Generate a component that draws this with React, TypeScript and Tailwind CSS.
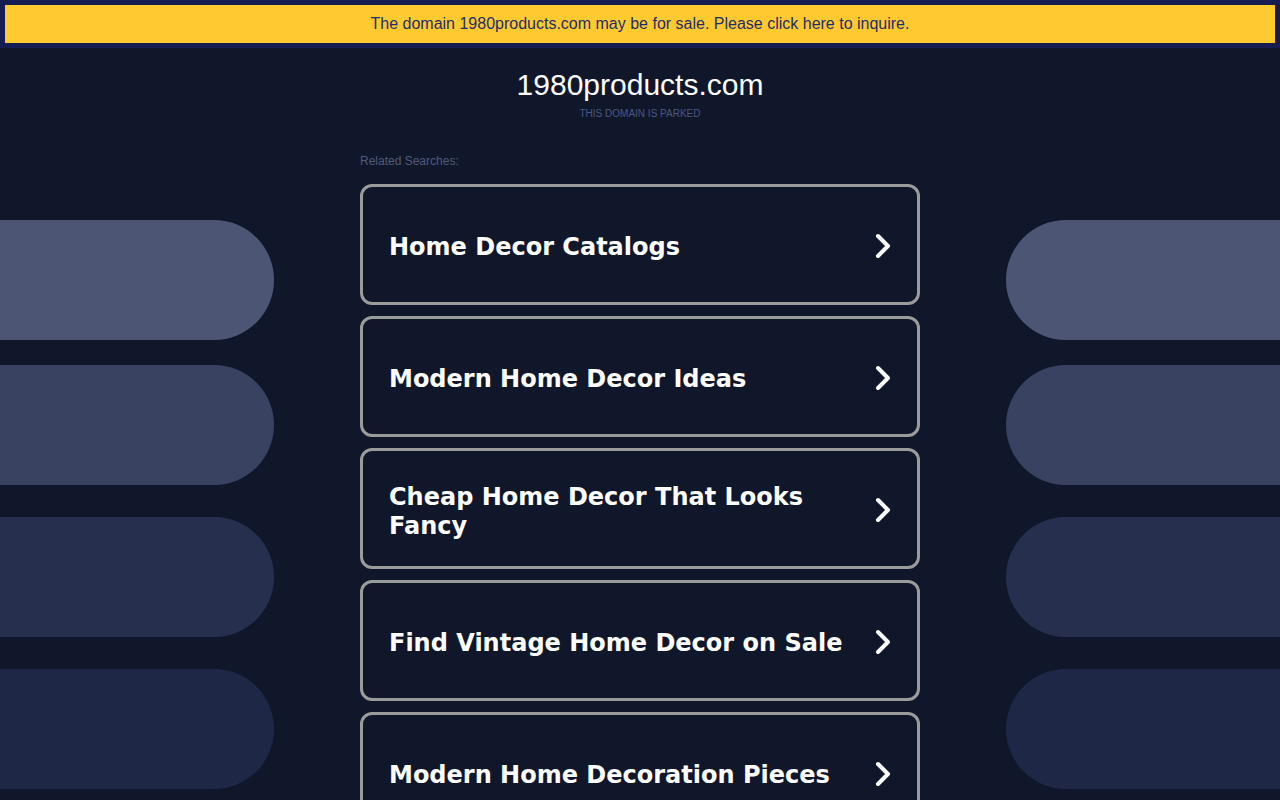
const searches = [
  'Home Decor Catalogs',
  'Modern Home Decor Ideas',
  'Cheap Home Decor That Looks Fancy',
  'Find Vintage Home Decor on Sale',
  'Modern Home Decoration Pieces',
]

const pills = [
  { color: 'bg-[#4c5674]', gap: 'mt-0' },
  { color: 'bg-[#394261]', gap: 'mt-[25px]' },
  { color: 'bg-[#272f4f]', gap: 'mt-[32px]' },
  { color: 'bg-[#1e2746]', gap: 'mt-[32px]' },
]

const Chevron = () => (
  <svg width="18" height="28" viewBox="0 0 18 28" fill="none" className="shrink-0 mt-[2px]">
    <polyline
      points="4,4 14,14 4,24"
      stroke="white"
      strokeWidth="4"
      strokeLinecap="round"
      strokeLinejoin="round"
    />
  </svg>
)

const PillColumn = ({ side }: { side: 'left' | 'right' }) => (
  <div className="w-[274px] shrink-0 pt-[172px] flex flex-col">
    {pills.map((p, i) => (
      <div
        key={i}
        className={`${p.gap} ${p.color} h-[120px] w-full ${
          side === 'left' ? 'rounded-r-[60px]' : 'rounded-l-[60px]'
        }`}
      />
    ))}
  </div>
)

export default function App() {
  return (
    <div className="min-h-screen bg-[#11172b] font-['Liberation_Sans',Arial,sans-serif]">
      <div className="bg-[#171c52] p-[5px]">
        <a
          href="#"
          className="flex h-[38px] items-center justify-center bg-[#ffca2f] text-[16px] text-[#1f2d6c]"
        >
          The domain 1980products.com may be for sale. Please click here to inquire.
        </a>
      </div>

      <div className="flex justify-between">
        <PillColumn side="left" />

        <div className="w-[560px] shrink-0 flex flex-col">
          <h1 className="mt-[19px] text-center text-[30px] leading-[36px] text-white whitespace-nowrap">
            1980products.com
          </h1>
          <p className="mt-[5px] text-center text-[10px] leading-[12px] text-[#4b5881]">
            THIS DOMAIN IS PARKED
          </p>
          <p className="mt-[34px] text-[12px] leading-[14px] text-[#4f5a7a]">Related Searches:</p>

          <div className="mt-[16px] flex flex-col gap-[11px]">
            {searches.map((s) => (
              <a
                key={s}
                href="#"
                className="flex h-[121px] items-center justify-between rounded-[12px] border-[3px] border-[#9b9b9b] pl-[26px] pr-[25px]"
              >
                <span className="pr-4 pt-[6px] font-['DejaVu_Sans',Verdana,sans-serif] text-[24px] font-bold leading-[29px] text-white">
                  {s}
                </span>
                <Chevron />
              </a>
            ))}
          </div>
        </div>

        <PillColumn side="right" />
      </div>
    </div>
  )
}
